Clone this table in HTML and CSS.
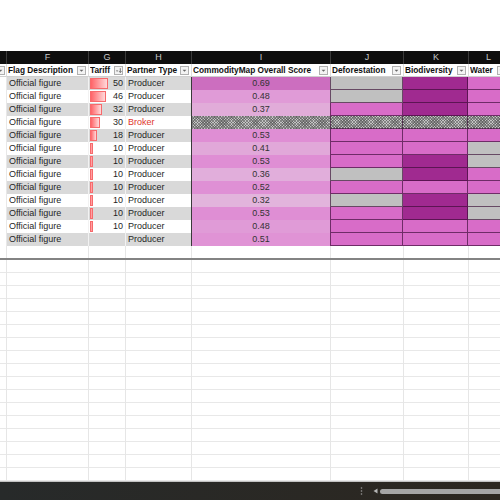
FILE: index.html
```html
<!DOCTYPE html>
<html>
<head>
<meta charset="utf-8">
<link rel="stylesheet" href="styles.css">
</head>
<body>
<div class="app">
  <div class="top"></div>

  <div class="colbar">
    <div class="cl"></div><div class="cl">F</div><div class="cl">G</div><div class="cl">H</div><div class="cl">I</div><div class="cl">J</div><div class="cl">K</div><div class="cl">L</div>
  </div>

  <div class="row head">
    <div class="c hc e"><svg class="fb" viewBox="0 0 9 9"><rect x="0.5" y="0.5" width="8" height="8" fill="#f3f3f3" stroke="#b0b0b0"/><path d="M2.6 3.8h3.8l-1.9 1.9z" fill="#666"/></svg></div>
    <div class="c hc"><span class="ht">Flag Description</span><svg class="fb" viewBox="0 0 9 9"><rect x="0.5" y="0.5" width="8" height="8" fill="#f3f3f3" stroke="#b0b0b0"/><path d="M2.6 3.8h3.8l-1.9 1.9z" fill="#666"/></svg></div>
    <div class="c hc"><span class="ht">Tariff</span><svg class="fb" viewBox="0 0 9 9"><rect x="0.5" y="0.5" width="8" height="8" fill="#f3f3f3" stroke="#b0b0b0"/><path d="M1.8 4.4h2.6l-1.3 1.4z" fill="#666"/><path d="M6.3 2.2v4.2M5.1 5.2l1.2 1.3 1.2-1.3" stroke="#555" stroke-width="0.8" fill="none"/></svg></div>
    <div class="c hc"><span class="ht">Partner Type</span><svg class="fb" viewBox="0 0 9 9"><rect x="0.5" y="0.5" width="8" height="8" fill="#f3f3f3" stroke="#b0b0b0"/><path d="M2.6 3.8h3.8l-1.9 1.9z" fill="#666"/></svg></div>
    <div class="c hc"><span class="ht">CommodityMap Overall Score</span><svg class="fb" viewBox="0 0 9 9"><rect x="0.5" y="0.5" width="8" height="8" fill="#f3f3f3" stroke="#b0b0b0"/><path d="M2.6 3.8h3.8l-1.9 1.9z" fill="#666"/></svg></div>
    <div class="c hc"><span class="ht">Deforestation</span><svg class="fb" viewBox="0 0 9 9"><rect x="0.5" y="0.5" width="8" height="8" fill="#f3f3f3" stroke="#b0b0b0"/><path d="M2.6 3.8h3.8l-1.9 1.9z" fill="#666"/></svg></div>
    <div class="c hc"><span class="ht">Biodiversity</span><svg class="fb" viewBox="0 0 9 9"><rect x="0.5" y="0.5" width="8" height="8" fill="#f3f3f3" stroke="#b0b0b0"/><path d="M2.6 3.8h3.8l-1.9 1.9z" fill="#666"/></svg></div>
    <div class="c hc"><span class="ht">Water</span><svg class="fb" viewBox="0 0 9 9"><rect x="0.5" y="0.5" width="8" height="8" fill="#f3f3f3" stroke="#b0b0b0"/><path d="M2.6 3.8h3.8l-1.9 1.9z" fill="#666"/></svg></div>
  </div>

  <div class="row band">
    <div class="c e"></div><div class="c f">Official figure</div>
    <div class="c g"><span class="bar" style="width:18px"></span><span class="num">50</span></div>
    <div class="c h">Producer</div>
    <div class="c s" style="background:#cc6ebf">0.69</div>
    <div class="c m j gr"></div><div class="c m dk"></div><div class="c m pk"></div>
  </div>
  <div class="row">
    <div class="c e"></div><div class="c f">Official figure</div>
    <div class="c g"><span class="bar" style="width:16px"></span><span class="num">46</span></div>
    <div class="c h">Producer</div>
    <div class="c s" style="background:#e09bd7">0.48</div>
    <div class="c m j gr"></div><div class="c m dk"></div><div class="c m pk"></div>
  </div>
  <div class="row band">
    <div class="c e"></div><div class="c f">Official figure</div>
    <div class="c g"><span class="bar" style="width:12px"></span><span class="num">32</span></div>
    <div class="c h">Producer</div>
    <div class="c s" style="background:#e1acd9">0.37</div>
    <div class="c m j pk"></div><div class="c m dk"></div><div class="c m pk"></div>
  </div>
  <div class="row">
    <div class="c e"></div><div class="c f">Official figure</div>
    <div class="c g"><span class="bar" style="width:10px"></span><span class="num">30</span></div>
    <div class="c h broker">Broker</div>
    <div class="c s hatch"></div>
    <div class="c m j hatch"></div><div class="c m hatch"></div><div class="c m hatch"></div>
  </div>
  <div class="row band">
    <div class="c e"></div><div class="c f">Official figure</div>
    <div class="c g"><span class="bar" style="width:7px"></span><span class="num">18</span></div>
    <div class="c h">Producer</div>
    <div class="c s" style="background:#df8ed4">0.53</div>
    <div class="c m j pk"></div><div class="c m pk"></div><div class="c m pk"></div>
  </div>
  <div class="row">
    <div class="c e"></div><div class="c f">Official figure</div>
    <div class="c g"><span class="bar" style="width:3px"></span><span class="num">10</span></div>
    <div class="c h">Producer</div>
    <div class="c s" style="background:#e1a8d9">0.41</div>
    <div class="c m j pk"></div><div class="c m pk"></div><div class="c m gr"></div>
  </div>
  <div class="row band">
    <div class="c e"></div><div class="c f">Official figure</div>
    <div class="c g"><span class="bar" style="width:3px"></span><span class="num">10</span></div>
    <div class="c h">Producer</div>
    <div class="c s" style="background:#df8ed4">0.53</div>
    <div class="c m j pk"></div><div class="c m dk"></div><div class="c m gr"></div>
  </div>
  <div class="row">
    <div class="c e"></div><div class="c f">Official figure</div>
    <div class="c g"><span class="bar" style="width:3px"></span><span class="num">10</span></div>
    <div class="c h">Producer</div>
    <div class="c s" style="background:#e1aedb">0.36</div>
    <div class="c m j gr"></div><div class="c m dk"></div><div class="c m pk"></div>
  </div>
  <div class="row band">
    <div class="c e"></div><div class="c f">Official figure</div>
    <div class="c g"><span class="bar" style="width:3px"></span><span class="num">10</span></div>
    <div class="c h">Producer</div>
    <div class="c s" style="background:#df90d5">0.52</div>
    <div class="c m j pk"></div><div class="c m pk"></div><div class="c m pk"></div>
  </div>
  <div class="row">
    <div class="c e"></div><div class="c f">Official figure</div>
    <div class="c g"><span class="bar" style="width:3px"></span><span class="num">10</span></div>
    <div class="c h">Producer</div>
    <div class="c s" style="background:#e2b4dc">0.32</div>
    <div class="c m j gr"></div><div class="c m dk"></div><div class="c m gr"></div>
  </div>
  <div class="row band">
    <div class="c e"></div><div class="c f">Official figure</div>
    <div class="c g"><span class="bar" style="width:3px"></span><span class="num">10</span></div>
    <div class="c h">Producer</div>
    <div class="c s" style="background:#df8ed4">0.53</div>
    <div class="c m j pk"></div><div class="c m dk"></div><div class="c m gr"></div>
  </div>
  <div class="row">
    <div class="c e"></div><div class="c f">Official figure</div>
    <div class="c g"><span class="bar" style="width:3px"></span><span class="num">10</span></div>
    <div class="c h">Producer</div>
    <div class="c s" style="background:#e09bd7">0.48</div>
    <div class="c m j pk"></div><div class="c m pk"></div><div class="c m pk"></div>
  </div>
  <div class="row band">
    <div class="c e"></div><div class="c f">Official figure</div>
    <div class="c g"></div>
    <div class="c h">Producer</div>
    <div class="c s" style="background:#e093d5">0.51</div>
    <div class="c m j pk"></div><div class="c m pk"></div><div class="c m pk"></div>
  </div>

  <div class="row gap">
    <div class="gc"></div><div class="gc"></div><div class="gc"></div><div class="gc"></div><div class="gc"></div><div class="gc"></div><div class="gc"></div><div class="gc"></div>
  </div>
  <div class="split"></div>
  <div class="empty">
    <div class="ec"></div><div class="ec"></div><div class="ec"></div><div class="ec"></div><div class="ec"></div><div class="ec"></div><div class="ec"></div><div class="ec"></div>
  </div>
  <div class="hline"></div>
  <div class="status">
    <svg class="dots" viewBox="0 0 3 8" width="3" height="8"><circle cx="1.5" cy="1" r="0.8" fill="#9a9a9a"/><circle cx="1.5" cy="4" r="0.8" fill="#9a9a9a"/><circle cx="1.5" cy="7" r="0.8" fill="#9a9a9a"/></svg>
    <svg class="arrow" viewBox="0 0 5 6" width="5" height="6"><path d="M0.5 3L4.5 0.5V5.5z" fill="#b5b5b5"/></svg>
    <div class="thumb"></div>
  </div>
</div>
</body>
</html>
```

FILE: styles.css
```css
* {
  box-sizing: border-box;
  margin: 0;
  padding: 0;
}

html, body {
  width: 500px;
  height: 500px;
  overflow: hidden;
  background: #fff;
}

body {
  font-family: "Liberation Sans", Arial, sans-serif;
  font-size: 9px;
  color: #1f1f1f;
}

.app {
  display: flex;
  flex-direction: column;
  width: 500px;
  height: 500px;
  overflow: hidden;
}

.top {
  height: 51px;
  flex: none;
}

.colbar,
.row,
.empty {
  display: grid;
  grid-template-columns: 6px 82px 37px 66px 139px 73px 65px 40px;
  width: 508px;
  flex: none;
}

.colbar {
  height: 13px;
  background: #0e0e0e;
}

.cl {
  border-left: 1px solid #3a3a3a;
  color: #c9c9c9;
  text-align: center;
  line-height: 13px;
  font-size: 9px;
}

.cl:first-child {
  border-left: none;
}

.row {
  height: 13px;
  line-height: 13px;
}

.c {
  overflow: hidden;
  white-space: nowrap;
  position: relative;
}

/* header row */
.head .c {
  display: flex;
  align-items: center;
  border-left: 1px solid #dedede;
  border-bottom: 1px solid #cfcfcf;
  padding-left: 1px;
  padding-right: 2px;
}

.head .e {
  border-left: none;
  justify-content: flex-end;
  padding-right: 1px;
}

.ht {
  flex: 1;
  font-weight: bold;
  font-size: 8.3px;
  color: #111;
  overflow: hidden;
}

.fb {
  width: 9px;
  height: 9px;
  flex: none;
}

/* data rows */
.f {
  padding-left: 2px;
  border-left: 1px solid #e8e8e8;
}

.g {
  text-align: right;
  padding-right: 2px;
  border-left: 1px solid #f2f2f2;
}

.h {
  padding-left: 2px;
  border-left: 1px solid #f2f2f2;
}

.band .f,
.band .g,
.band .h {
  background: #d9d9d9;
}

.num {
  position: relative;
}

.bar {
  position: absolute;
  left: 1px;
  top: 1px;
  bottom: 1px;
  border: 1px solid #f76a6c;
  background: linear-gradient(to right, #ff6468, #ffd9da);
}

.broker {
  color: #e0342c;
}

.s {
  text-align: center;
  color: #333;
  border-left: 1px solid #3a3a3a;
}

.m {
  border-right: 1px solid rgba(55, 10, 50, 0.65);
  border-bottom: 1px solid rgba(55, 10, 50, 0.65);
}

.m.j {
  border-left: 1px solid rgba(55, 10, 50, 0.65);
}

.pk {
  background: #d86cc8;
}

.dk {
  background: #a02a90;
}

.gr {
  background: #c0c0c0;
}

.hatch {
  background-color: #c4c4c4;
  background-image:
    repeating-linear-gradient(45deg, rgba(70, 70, 70, 0.5) 0 1px, transparent 1px 2px),
    repeating-linear-gradient(135deg, rgba(70, 70, 70, 0.5) 0 1px, transparent 1px 2px);
}

/* empty grid below the table */
.gap {
  height: 12px;
}

.gc {
  border-left: 1px solid #e6e6e6;
}

.gc:first-child,
.ec:first-child {
  border-left: none;
}

.split {
  height: 2px;
  flex: none;
  background: #838383;
}

.empty {
  flex: 1;
  min-height: 0;
}

.ec {
  border-left: 1px solid #e6e6e6;
  background: repeating-linear-gradient(to bottom, transparent 0 12px, #e8e8e8 12px 13px);
}

.hline {
  height: 1px;
  flex: none;
  background: #c2c2c2;
}

.status {
  height: 18px;
  flex: none;
  display: flex;
  align-items: center;
  padding-left: 360px;
  background: linear-gradient(to right, #272a2a, #2c2720);
}

.dots {
  flex: none;
}

.arrow {
  flex: none;
  margin-left: 10px;
}

.thumb {
  flex: 1;
  height: 5px;
  margin-left: 2px;
  margin-right: -8px;
  border-radius: 3px;
  background: #a5a5a5;
}
```
